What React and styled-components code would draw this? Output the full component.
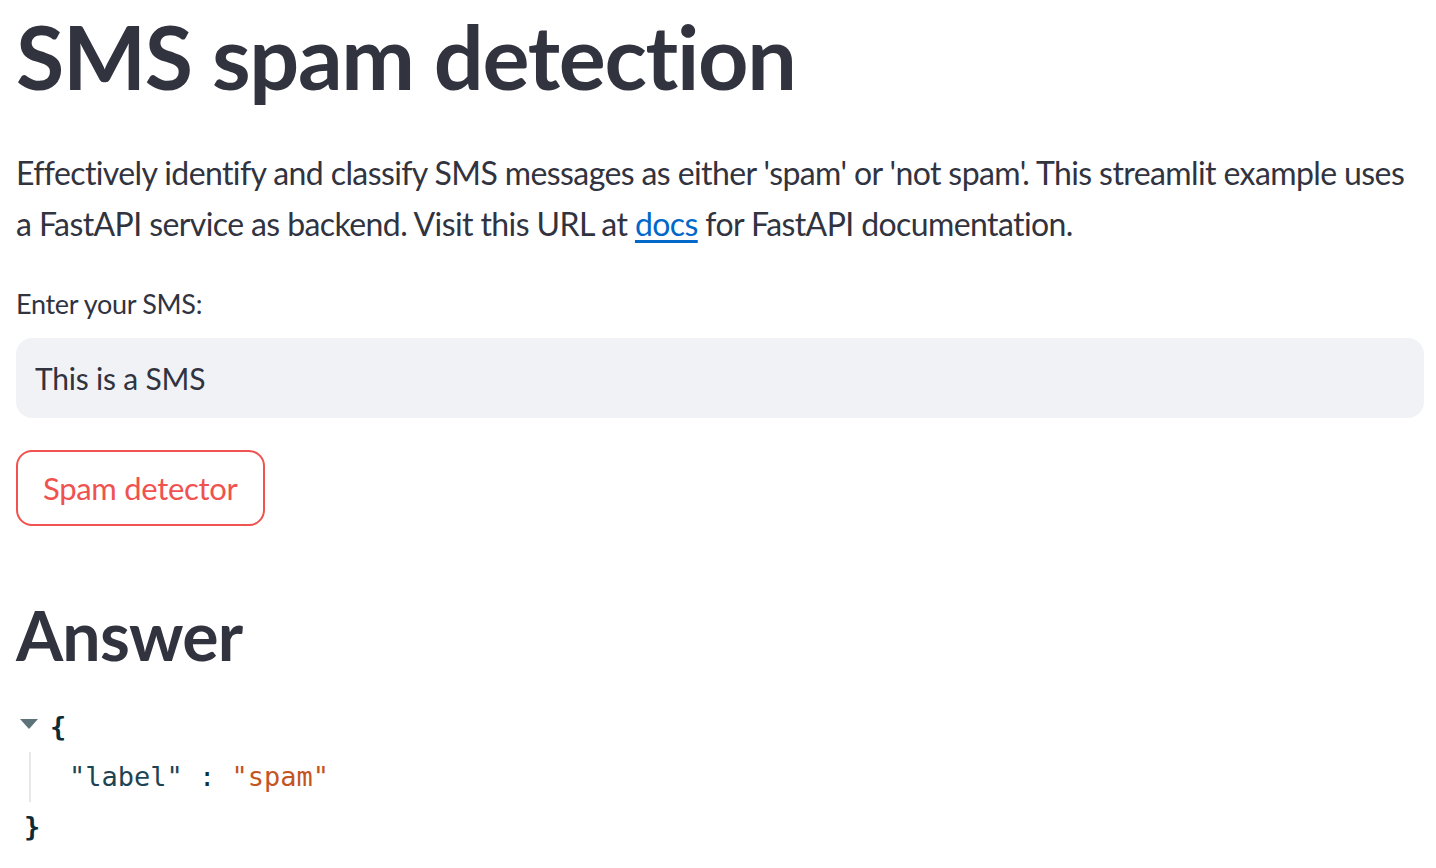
import styled, { createGlobalStyle } from "styled-components";

const GlobalStyle = createGlobalStyle`
  body {
    margin: 0;
    background: #ffffff;
    font-family: "Lato", "Noto Sans", sans-serif;
    color: #31333f;
  }
`;

const Main = styled.main`
  width: 1408px;
  padding: 0 12px 0 16px;
  display: flex;
  flex-direction: column;
`;

const Title = styled.h1`
  margin: 0;
  padding: 4px 0 37px;
  font-size: 88px;
  font-weight: 700;
  line-height: 1.2;
  letter-spacing: -1.3px;
`;

const Text = styled.p`
  margin: 0 0 35px;
  font-size: 32px;
  line-height: 51px;
  letter-spacing: -0.6px;

  a {
    color: #0068c9;
    text-decoration: underline;
    text-underline-offset: 4px;
  }
`;

const Label = styled.label`
  font-size: 27px;
  line-height: 40px;
  margin-bottom: 14px;
  letter-spacing: -0.3px;
`;

const Input = styled.input`
  box-sizing: border-box;
  width: 100%;
  height: 80px;
  border: none;
  outline: none;
  border-radius: 16px;
  background: #f0f2f6;
  padding: 0 19px;
  font-family: inherit;
  font-size: 30px;
  color: #31333f;
  letter-spacing: -0.2px;
`;

const Button = styled.button`
  align-self: flex-start;
  margin-top: 32px;
  height: 76px;
  padding: 0 25px;
  border: 2px solid #f0524f;
  border-radius: 16px;
  background: #ffffff;
  color: #f0524f;
  font-family: inherit;
  font-size: 31px;
  letter-spacing: -0.3px;
`;

const Heading = styled.h2`
  margin: 0;
  padding: 68px 0 27px;
  font-size: 68px;
  font-weight: 700;
  line-height: 1.2;
  letter-spacing: -0.8px;
`;

const Json = styled.div`
  font-family: "DejaVu Sans Mono", "Liberation Mono", monospace;
  font-size: 27px;
  line-height: 50px;
  color: #0b3342;
`;

const Row = styled.div`
  display: flex;
  align-items: center;
  gap: 12px;
`;

const Caret = styled.span`
  width: 0;
  height: 0;
  margin: 0 0 6px 4px;
  border-left: 9px solid transparent;
  border-right: 9px solid transparent;
  border-top: 10px solid #5d7279;
`;

const Brace = styled.span`
  font-weight: 700;
  color: #0b2b36;
`;

const Body = styled.div`
  margin-left: 13px;
  padding-left: 38px;
  border-left: 2px solid #e8e8e8;
`;

const Key = styled.span`
  color: #1d4452;
`;

const Value = styled.span`
  color: #c5541f;
`;

const Close = styled.div`
  padding-left: 8px;
`;

export default function App() {
  return (
    <>
      <GlobalStyle />
      <Main>
        <Title>SMS spam detection</Title>
        <Text>
          Effectively identify and classify SMS messages as either 'spam' or
          'not spam'. This streamlit example uses a FastAPI service as backend.
          Visit this URL at <a href="#docs">docs</a> for FastAPI documentation.
        </Text>
        <Label htmlFor="sms">Enter your SMS:</Label>
        <Input id="sms" defaultValue="This is a SMS" />
        <Button>Spam detector</Button>
        <Heading>Answer</Heading>
        <Json>
          <Row>
            <Caret />
            <Brace>{"{"}</Brace>
          </Row>
          <Body>
            <Key>"label"</Key> : <Value>"spam"</Value>
          </Body>
          <Close>
            <Brace>{"}"}</Brace>
          </Close>
        </Json>
      </Main>
    </>
  );
}
